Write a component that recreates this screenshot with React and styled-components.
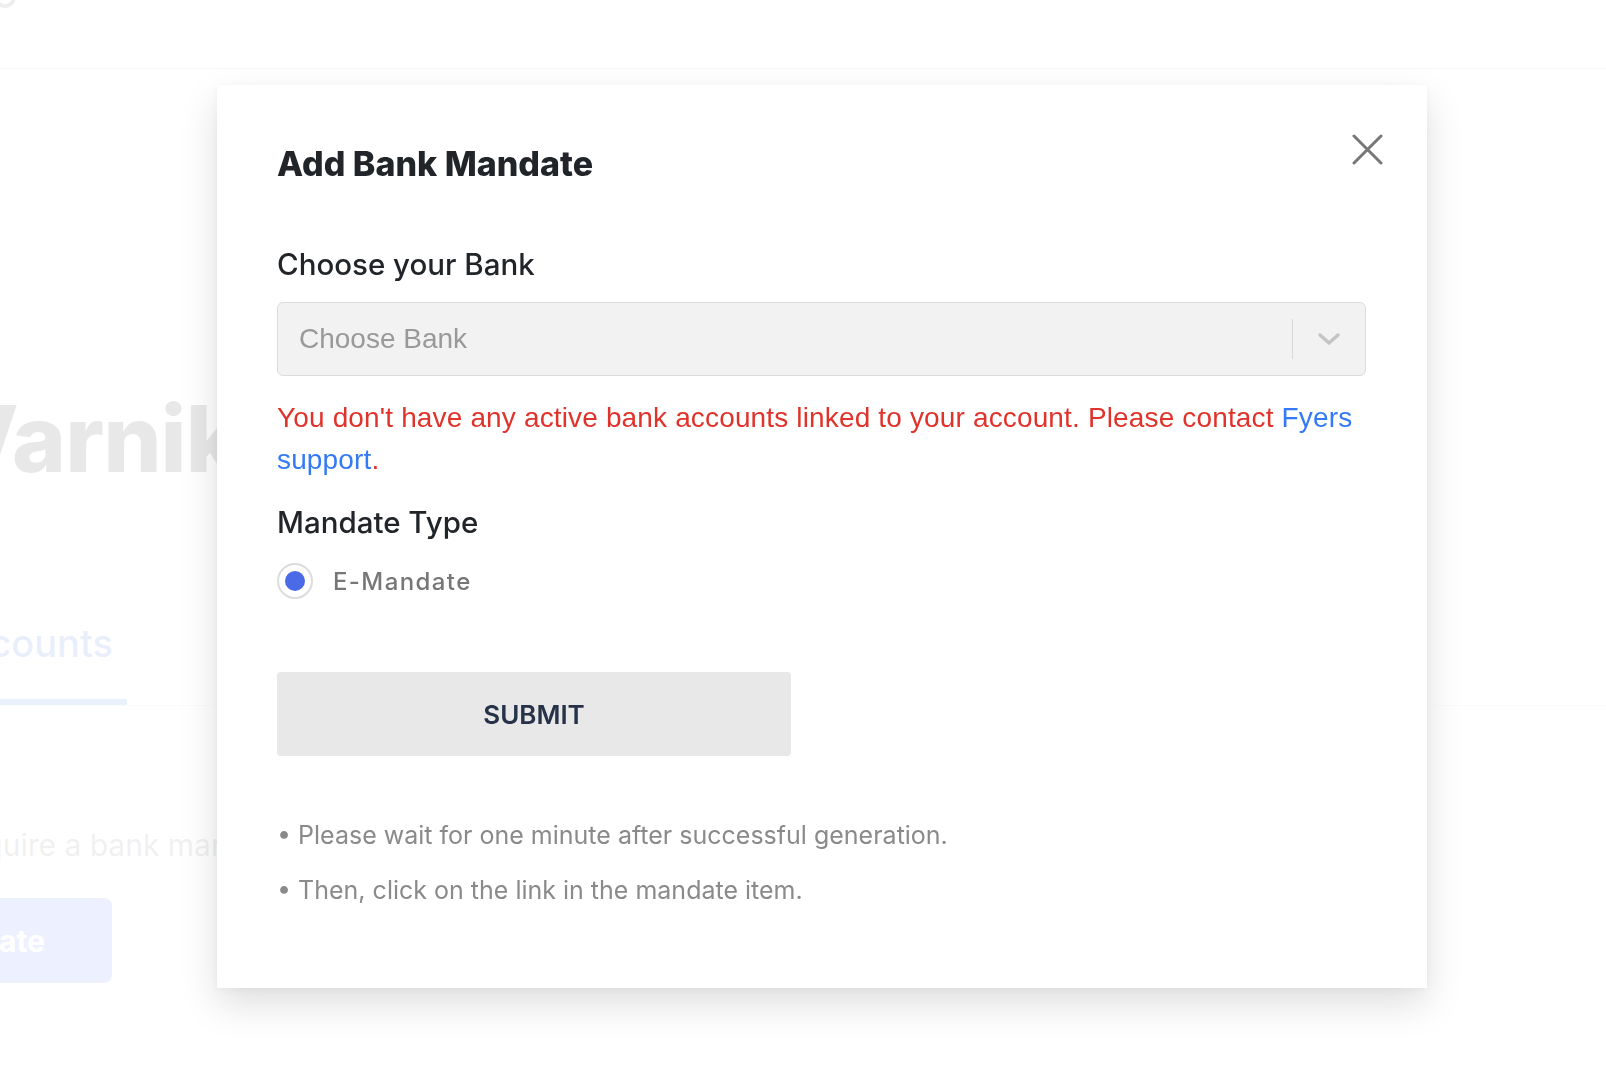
import React from 'react';
import styled, { createGlobalStyle } from 'styled-components';

const GlobalStyle = createGlobalStyle`
  html, body {
    margin: 0;
    padding: 0;
    background: #fff;
    overflow: hidden;
  }
  body {
    font-family: Inter, "Noto Sans", sans-serif;
  }
  * { box-sizing: border-box; }
`;

export default function App() {
  return (
    <>
      <GlobalStyle />
      <Page>
        <Header>
          <LogoDot />
        </Header>
        <Hero>Varnik</Hero>
        <Tabs>
          <Tab active>Bank Accounts</Tab>
        </Tabs>
        <Intro>require a bank mandate to start your SIP</Intro>
        <GhostButton>Create Mandate</GhostButton>
      </Page>

      <Overlay>
        <Modal>
          <TitleRow>
            <Title>Add Bank Mandate</Title>
            <CloseButton aria-label="close">
              <svg width="31" height="31" viewBox="0 0 31 31">
                <path d="M2 2 L29 29 M29 2 L2 29" stroke="#777" strokeWidth="3" strokeLinecap="round" />
              </svg>
            </CloseButton>
          </TitleRow>

          <Label>Choose your Bank</Label>
          <Select>
            <Placeholder>Choose Bank</Placeholder>
            <Separator />
            <Chevron>
              <svg width="24" height="14" viewBox="0 0 24 14">
                <path d="M3 3 L12 11 L21 3" fill="none" stroke="#c4c4c4" strokeWidth="3.4" strokeLinecap="round" strokeLinejoin="round" />
              </svg>
            </Chevron>
          </Select>

          <ErrorText>
            You don't have any active bank accounts linked to your account. Please contact{' '}
            <Link>Fyers support</Link>.
          </ErrorText>

          <Label spaced>Mandate Type</Label>
          <RadioRow>
            <Radio><RadioDot /></Radio>
            <RadioLabel>E-Mandate</RadioLabel>
          </RadioRow>

          <SubmitButton>SUBMIT</SubmitButton>

          <Notes>
            <Note>• Please wait for one minute after successful generation.</Note>
            <Note>• Then, click on the link in the mandate item.</Note>
          </Notes>
        </Modal>
      </Overlay>
    </>
  );
}

// background page
const Page = styled.div`
  width: 1606px;
  height: 1084px;
  overflow: hidden;
`;

const Header = styled.div`
  height: 69px;
  border-bottom: 1px solid #a8a8a8;
  display: flex;
  align-items: flex-start;
`;

const LogoDot = styled.div`
  width: 22px;
  height: 22px;
  margin: -14px 0 0 -6px;
  border: 4px solid #555;
  border-radius: 50%;
`;

const Hero = styled.div`
  margin: 320px 0 0 -52px;
  font-size: 92px;
  line-height: 100px;
  font-weight: 800;
  color: #1a1a1a;
  letter-spacing: -1px;
  white-space: nowrap;
`;

const Tabs = styled.div`
  margin-top: 130px;
  border-bottom: 1px solid #d8d8d8;
  display: flex;
`;

const Tab = styled.div`
  margin-left: -160px;
  padding: 0 14px 32px 0;
  font-size: 38px;
  line-height: 48px;
  font-weight: 500;
  color: #2355d7;
  white-space: nowrap;
  border-bottom: 6px solid ${p => (p.active ? '#2f63e0' : 'transparent')};
`;

const Intro = styled.div`
  margin: 117px 0 0 -44px;
  font-size: 30px;
  line-height: 44px;
  color: #6a6a6a;
  white-space: nowrap;
`;

const GhostButton = styled.div`
  margin: 31px 0 0 -200px;
  width: 312px;
  height: 85px;
  border-radius: 8px;
  background: #4b6cf0;
  color: #fff;
  font-size: 30px;
  font-weight: 700;
  display: flex;
  align-items: center;
  justify-content: flex-end;
  padding-right: 67px;
  white-space: nowrap;
`;

// modal
const Overlay = styled.div`
  position: fixed;
  inset: 0;
  background: rgba(255, 255, 255, 0.9);
  display: flex;
  justify-content: center;
  align-items: flex-start;
  padding: 85px 0 0 38px;
`;

const Modal = styled.div`
  width: 1210px;
  min-height: 903px;
  background: #fff;
  padding: 55px 61px 0 60px;
  box-shadow: 0 16px 36px rgba(0, 0, 0, 0.13), 0 2px 8px rgba(0, 0, 0, 0.04);
`;

const TitleRow = styled.div`
  display: flex;
  justify-content: space-between;
  align-items: flex-start;
`;

const Title = styled.h2`
  margin: 0;
  font-size: 34px;
  line-height: 48px;
  font-weight: 800;
  color: #212529;
`;

const CloseButton = styled.button`
  margin: -6px -17px 0 0;
  padding: 0;
  border: 0;
  background: none;
  width: 31px;
  height: 31px;
  cursor: pointer;
  display: flex;
`;

const Label = styled.div`
  margin-top: ${p => (p.spaced ? '21px' : '56px')};
  font-size: 29.5px;
  line-height: 40px;
  font-weight: 500;
  color: #212529;
`;

const Select = styled.div`
  margin-top: 18px;
  height: 74px;
  background: #f2f2f2;
  border: 1px solid #dcdcdc;
  border-radius: 6px;
  display: flex;
  align-items: center;
  padding-left: 21px;
`;

const Placeholder = styled.div`
  flex: 1;
  font-family: "Liberation Sans", Arial, sans-serif;
  font-size: 28px;
  color: #999;
`;

const Separator = styled.div`
  width: 1px;
  height: 40px;
  background: #d8d8d8;
`;

const Chevron = styled.div`
  width: 72px;
  display: flex;
  justify-content: center;
  align-items: center;
`;

const ErrorText = styled.p`
  margin: 21px 0 0;
  font-family: "Liberation Sans", Arial, sans-serif;
  font-size: 28px;
  line-height: 42px;
  letter-spacing: 0.15px;
  color: #e0332b;
`;

const Link = styled.span`
  color: #347af6;
  cursor: pointer;
`;

const RadioRow = styled.div`
  margin-top: 19px;
  height: 40px;
  display: flex;
  align-items: center;
  gap: 20px;
`;

const Radio = styled.div`
  width: 36px;
  height: 36px;
  border: 2px solid #dcdcdc;
  border-radius: 50%;
  display: flex;
  align-items: center;
  justify-content: center;
`;

const RadioDot = styled.div`
  width: 20px;
  height: 20px;
  border-radius: 50%;
  background: #4a6ae8;
`;

const RadioLabel = styled.div`
  font-size: 24px;
  font-weight: 500;
  color: #777;
  letter-spacing: 1.4px;
`;

const SubmitButton = styled.button`
  margin-top: 71px;
  width: 514px;
  height: 84px;
  border: 0;
  border-radius: 4px;
  background: #e8e8e8;
  color: #253247;
  font-family: inherit;
  font-size: 26px;
  font-weight: 600;
  cursor: pointer;
  display: block;
`;

const Notes = styled.ul`
  list-style: none;
  margin: 52px 0 0;
  padding: 0;
`;

const Note = styled.li`
  font-size: 25px;
  line-height: 55px;
  color: #8a8a8a;
`;
